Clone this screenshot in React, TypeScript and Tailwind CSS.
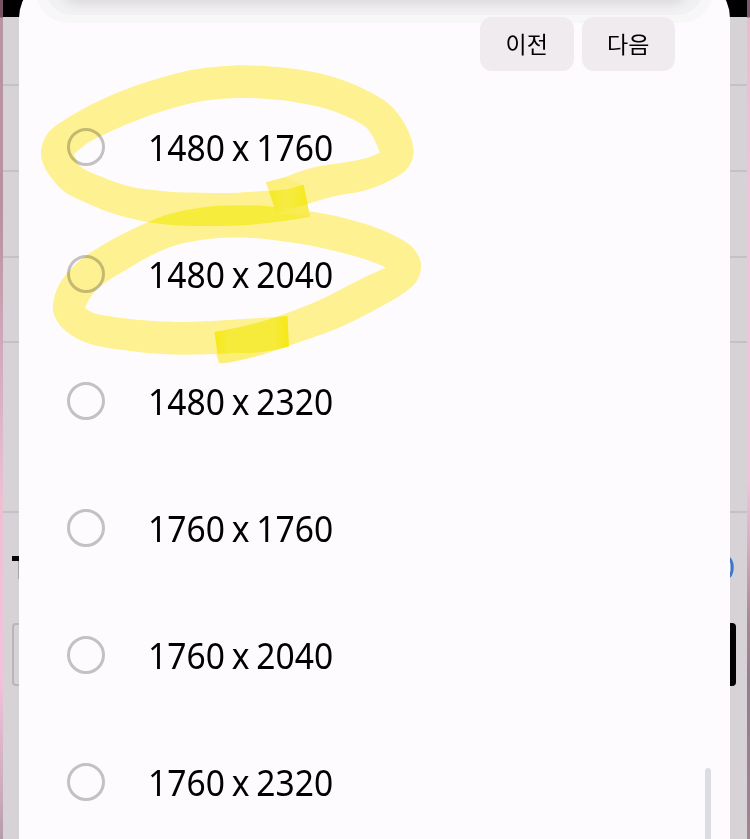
type Point = [number, number];

const resolutions = ['1480 x 1760', '1480 x 2040', '1480 x 2320', '1760 x 1760', '1760 x 2040', '1760 x 2320'];

// Turns runs of points into one closed path; each run is smooth, run ends stay sharp.
function outline(runs: Point[][]): string {
  let d = '';
  runs.forEach((run, r) => {
    d += `${r === 0 ? 'M' : 'L'}${run[0][0]} ${run[0][1]}`;
    for (let i = 0; i < run.length - 1; i++) {
      const p0 = run[Math.max(i - 1, 0)];
      const p1 = run[i];
      const p2 = run[i + 1];
      const p3 = run[Math.min(i + 2, run.length - 1)];
      d += `C${p1[0] + (p2[0] - p0[0]) / 6} ${p1[1] + (p2[1] - p0[1]) / 6} ${p2[0] - (p3[0] - p1[0]) / 6} ${p2[1] - (p3[1] - p1[1]) / 6} ${p2[0]} ${p2[1]}`;
    }
  });
  return d + 'Z';
}

const firstLoop =
  outline([
    [[310, 217], [280, 221.5], [247, 225], [213, 226], [180, 225.5], [147, 222], [113, 213.5], [80, 200], [63, 190.5], [50, 176], [42.5, 162], [41.3, 149], [48, 133], [65, 119.5], [97, 101.7], [130, 87.7], [163, 77], [197, 69], [230, 65.7], [253, 65.5], [287, 68], [320, 73.5], [353, 84], [385, 101], [401, 118], [411, 138], [413.3, 155], [406, 170], [387, 182], [363, 191], [333, 196.5], [307.5, 204]],
  ]) +
  outline([
    [[74, 154], [87, 143.5], [103, 135], [130, 123], [163, 111], [197, 102], [223, 98.7], [247, 98], [280, 100], [313, 105.5], [337, 112.5], [363, 125], [373, 137], [380, 152.5]],
    [[380, 152.5], [367, 158], [347, 162], [320, 166], [300, 171.5], [284, 177.5], [266, 182.5]],
    [[269, 190.5], [240, 192.5], [220, 193], [180, 192.3], [163, 191], [130, 186.5], [97, 175], [80, 166], [74, 154]],
  ]);

const secondLoop =
  outline([
    [[219, 363], [230, 362.5], [260, 355.5], [288, 346], [310, 338.5], [337, 328.5], [370, 312.5], [401, 295], [416, 282], [421, 268], [418, 255], [406, 242], [377, 228], [343, 217.7], [310, 211.5], [270, 206.5], [247, 205.3], [210, 206.5], [173, 213], [147, 222.5], [117, 237], [87, 255], [68, 272], [57, 289], [52.8, 307], [56, 319], [64, 329.5], [80, 340], [100, 346.5], [123, 350], [147, 353], [180, 354.7], [216, 354]],
  ]) +
  outline([
    [[85, 308], [92, 295], [103, 284], [130, 267.5], [153, 254.5], [180, 244], [213, 238.5], [247, 237.7], [277, 240.5], [310, 245.5], [343, 253], [370, 261], [386, 267.5]],
    [[386, 267.5], [360, 279.5], [327, 296.5], [303, 307], [276, 317]],
    [[276, 317], [260, 318], [210, 321], [180, 322], [147, 320.5], [130, 319], [97, 314], [85, 308]],
  ]);

function Highlighter() {
  return (
    <svg className="pointer-events-none absolute inset-0 mix-blend-multiply" width="750" height="839" viewBox="0 0 750 839">
      <defs>
        <clipPath id="first"><path d={firstLoop} clipRule="evenodd" /></clipPath>
        <linearGradient id="capA" x1="0" x2="1">
          <stop offset="0" stopColor="#f7ed27" /><stop offset=".45" stopColor="#f7f043" /><stop offset="1" stopColor="#f7ed1e" />
        </linearGradient>
        <linearGradient id="capB" x1="0" x2="1">
          <stop offset="0" stopColor="#f7ed17" /><stop offset=".18" stopColor="#f7ef3a" /><stop offset=".8" stopColor="#f7ef3a" /><stop offset="1" stopColor="#f7ec14" />
        </linearGradient>
      </defs>
      <path d={firstLoop} fill="#fff592" fillRule="evenodd" />
      <path d={secondLoop} fill="#fff592" fillRule="evenodd" />
      <path d={secondLoop} fill="#f7f03c" fillRule="evenodd" clipPath="url(#first)" />
      <path d="M266 182.3L284 177.5L303.5 185L269 191Z" fill="#fdf37e" />
      <path d="M269 191Q287 190 303.5 184.8L310 217Q290 213 276.7 214Z" fill="#f9f052" />
      <path d="M269 191Q287 190 303.5 184.8L307.5 204Q291 208 276.7 214Z" fill="url(#capA)" />
      <path d="M214.5 332Q250 326 276 317L287.5 316L289 346.5Q266 353 247 353L217.5 354Z" fill="url(#capB)" />
      <path d="M217.5 354L247 353L266 353Q230 363 219 363Z" fill="#fcf375" />
    </svg>
  );
}

function PageBehind() {
  return (
    <div className="flex h-full">
      <div className="w-[3px] shrink-0 bg-[linear-gradient(#775263_0px,#775263_17px,#b795a1_18px,#b991a1_220px,#cfa8bb_340px,#edc0d4_500px,#f2c2db_680px,#c8a9b9_800px,#b39caa_839px)]" />
      <div className="flex flex-1 flex-col bg-[#d6d2d5]">
        <div className="h-[17px] shrink-0 bg-black" />
        <div className="h-[69px] shrink-0 border-b-2 border-[#c5c2c5]" />
        <div className="h-[86px] shrink-0 border-b-2 border-[#c5c2c5]" />
        <div className="h-[86px] shrink-0 border-b-2 border-[#c5c2c5]" />
        <div className="h-[85px] shrink-0 border-b-2 border-[#c5c2c5]" />
        <div className="h-[170px] shrink-0 border-b-2 border-[#c5c2c5]" />
        <div className="mt-[43px] flex h-[25px] shrink-0 justify-between pr-[13px] pl-[9px]">
          <svg width="22" height="25" viewBox="0 0 22 25"><path d="M0 0H22V5H0Z" fill="#050505" /><path d="M6.5 5V23" stroke="#a9a3a7" /></svg>
          <svg width="20" height="25" viewBox="0 0 20 25"><path d="M13 1.5C20 2 20 21 13 21.5" fill="none" stroke="#3978ce" strokeWidth="3" /></svg>
        </div>
        <div className="mt-[42px] flex h-[63px] shrink-0 justify-between pr-[11px] pl-[9px]">
          <div className="w-[60px] rounded-[4px] border-2 border-[#b9b5b9]" />
          <div className="w-[60px] rounded-[4px] bg-black" />
        </div>
      </div>
      <div className="w-[3px] shrink-0 bg-[linear-gradient(#80586b_0px,#80586b_17px,#edbbcf_18px,#f5c2db_200px,#f5c2dc_480px,#dbb0c3_540px,#aa8795_620px,#91808c_680px,#a08492_839px)]" />
    </div>
  );
}

export default function App() {
  return (
    <main className="relative h-[839px] w-[750px] overflow-hidden bg-[#d6d2d5] font-['Noto_Sans','Noto_Sans_CJK_KR',sans-serif] text-black">
      <PageBehind />
      <section className="absolute -top-[22px] bottom-0 left-[19px] w-[711px] overflow-hidden rounded-t-[40px] bg-[#fefbff]">
        <div className="absolute -top-[18px] right-[17px] left-[17px] h-[63px] rounded-[60px] bg-[#f7f7f8]" />
        <div className="absolute -top-[18px] right-[26px] left-[26px] h-[55px] rounded-[52px] bg-[#f1f0f2]" />
        <div className="absolute -top-[10px] right-[44px] left-[44px] h-[32px] rounded-[26px] bg-[#dad7da] shadow-[0_1px_9px_4px_#dfdcdf]" />
        <div className="relative flex justify-end gap-[8px] pt-[38.5px] pr-[55px] font-['Noto_Sans_CJK_KR',sans-serif] text-[23px]">
          <button className="flex h-[54px] w-[93.5px] items-center justify-center rounded-[12px] bg-[#efebef] leading-none">이전</button>
          <button className="flex h-[54px] w-[93.5px] items-center justify-center rounded-[12px] bg-[#efebef] leading-none">다음</button>
        </div>
        <ul className="mt-[12.5px] pl-[48px]">
          {resolutions.map((size) => (
            <li key={size} className="flex h-[127px] items-center">
              <span className="size-[38px] shrink-0 rounded-full border-[3px] border-[#c3c1c3]" />
              <span className="mt-[2px] ml-[42.5px] inline-block origin-left scale-x-[.933] text-[36px] leading-[48px] font-normal [word-spacing:-2px] whitespace-nowrap">{size}</span>
            </li>
          ))}
        </ul>
        <div className="absolute right-[19px] bottom-0 h-[71px] w-[6px] rounded-t-full bg-[#dcdce5]" />
      </section>
      <Highlighter />
    </main>
  );
}
